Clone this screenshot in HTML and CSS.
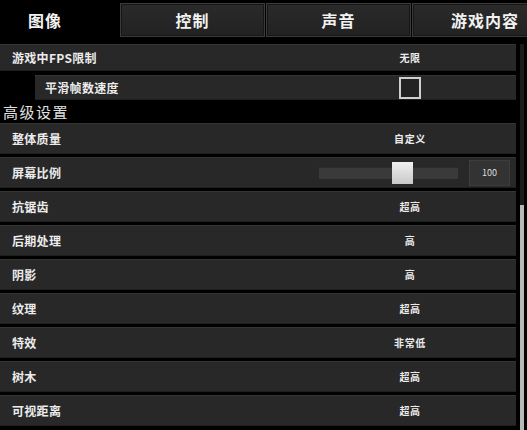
FILE: index.html
```html
<!DOCTYPE html>
<html lang="zh-CN">
<head>
<meta charset="utf-8">
<link rel="stylesheet" href="styles.css">
</head>
<body>
<nav class="tabs">
  <div class="tab active first">图像</div>
  <div class="tab">控制</div>
  <div class="tab">声音</div>
  <div class="tab last">游戏内容</div>
</nav>
<div class="main">
  <div class="list">
    <div class="row row-top"><span class="label">游戏中FPS限制</span><span class="value">无限</span></div>
    <div class="row row-sub"><span class="label">平滑帧数速度</span><span class="value"><span class="checkbox"></span></span></div>
    <div class="heading">高级设置</div>
    <div class="row"><span class="label">整体质量</span><span class="value">自定义</span></div>
    <div class="row"><span class="label">屏幕比例</span>
      <span class="value slider-cell">
        <span class="track"><span class="thumb"></span></span>
        <span class="num">100</span>
      </span>
    </div>
    <div class="row"><span class="label">抗锯齿</span><span class="value">超高</span></div>
    <div class="row"><span class="label">后期处理</span><span class="value">高</span></div>
    <div class="row"><span class="label">阴影</span><span class="value">高</span></div>
    <div class="row"><span class="label">纹理</span><span class="value">超高</span></div>
    <div class="row"><span class="label">特效</span><span class="value">非常低</span></div>
    <div class="row"><span class="label">树木</span><span class="value">超高</span></div>
    <div class="row"><span class="label">可视距离</span><span class="value">超高</span></div>
  </div>
  <div class="scroll"><div class="scroll-thumb"></div></div>
</div>
</body>
</html>
```
FILE: styles.css
```css
html, body {
  margin: 0;
  padding: 0;
  background: #000;
  overflow: hidden;
  width: 527px;
  height: 430px;
}
body {
  font-family: "Noto Sans CJK SC", "Noto Sans", sans-serif;
  color: #ececec;
}
.tabs {
  display: flex;
  gap: 1px;
  padding-top: 3px;
  height: 34px;
}
.tab {
  flex: none;
  width: 143px;
  height: 32px;
  border: 1px solid #3b3b3b;
  background: linear-gradient(#2a2a2a, #222);
  box-shadow: inset 0 0 0 1px #171717;
  display: flex;
  align-items: center;
  justify-content: center;
  font-size: 16px;
  font-weight: bold;
  color: #f2f2f2;
  letter-spacing: 1px;
}
.tab.first {
  width: 88px;
  padding-right: 29px;
}
.tab.last {
  width: 88px;
  padding-left: 28px;
  border-right: none;
}
.tab.active {
  background: #000;
  border-color: #000;
  box-shadow: none;
}
.main {
  display: flex;
  margin-top: 7px;
}
.list {
  width: 516px;
  flex: none;
}
.scroll {
  width: 4px;
  margin-left: 4px;
  background: #1c1c1c;
  display: flex;
  flex-direction: column;
  justify-content: flex-end;
  height: 386px;
}
.scroll-thumb {
  height: 225px;
  background: #b8b8b8;
}
.row {
  display: grid;
  grid-template-columns: 1fr 200px;
  align-items: center;
  height: 29px;
  margin-bottom: 3px;
  padding-right: 6px;
  background: #282828;
  border-top: 1px solid #343434;
  border-bottom: 1px solid #1f1f1f;
  font-size: 12px;
  font-weight: bold;
}
.label {
  padding-left: 12px;
  letter-spacing: 0.3px;
}
.value {
  text-align: center;
  font-size: 10px;
  letter-spacing: 0.6px;
  display: flex;
  justify-content: center;
  align-items: center;
}
.row-top {
  height: 25px;
  margin-bottom: 4px;
}
.row-sub {
  height: 23px;
  margin-left: 35px;
  margin-bottom: 0;
}
.row-sub .label {
  padding-left: 10px;
}
.checkbox {
  width: 18px;
  height: 18px;
  border: 2px solid #cfcfcf;
  background: #222;
}
.heading {
  height: 23px;
  display: flex;
  align-items: center;
  padding-left: 3px;
  font-size: 15px;
  letter-spacing: 1.5px;
  color: #e0e0e0;
}
.slider-cell {
  justify-content: flex-start;
  padding-left: 9px;
  gap: 11px;
}
.track {
  position: relative;
  width: 139px;
  height: 12px;
  background: #3a3a3a;
  border-top: 1px solid #2c2c2c;
  box-sizing: border-box;
}
.thumb {
  position: absolute;
  left: 73px;
  top: -6px;
  width: 21px;
  height: 22px;
  background: linear-gradient(#f0f0f0, #c8c8c8);
}
.num {
  width: 41px;
  height: 26px;
  background: #333;
  border: 1px solid #3d3d3d;
  box-sizing: border-box;
  display: flex;
  align-items: center;
  justify-content: center;
  font-size: 9px;
  font-weight: normal;
  letter-spacing: 0;
  color: #ddd;
}
```
